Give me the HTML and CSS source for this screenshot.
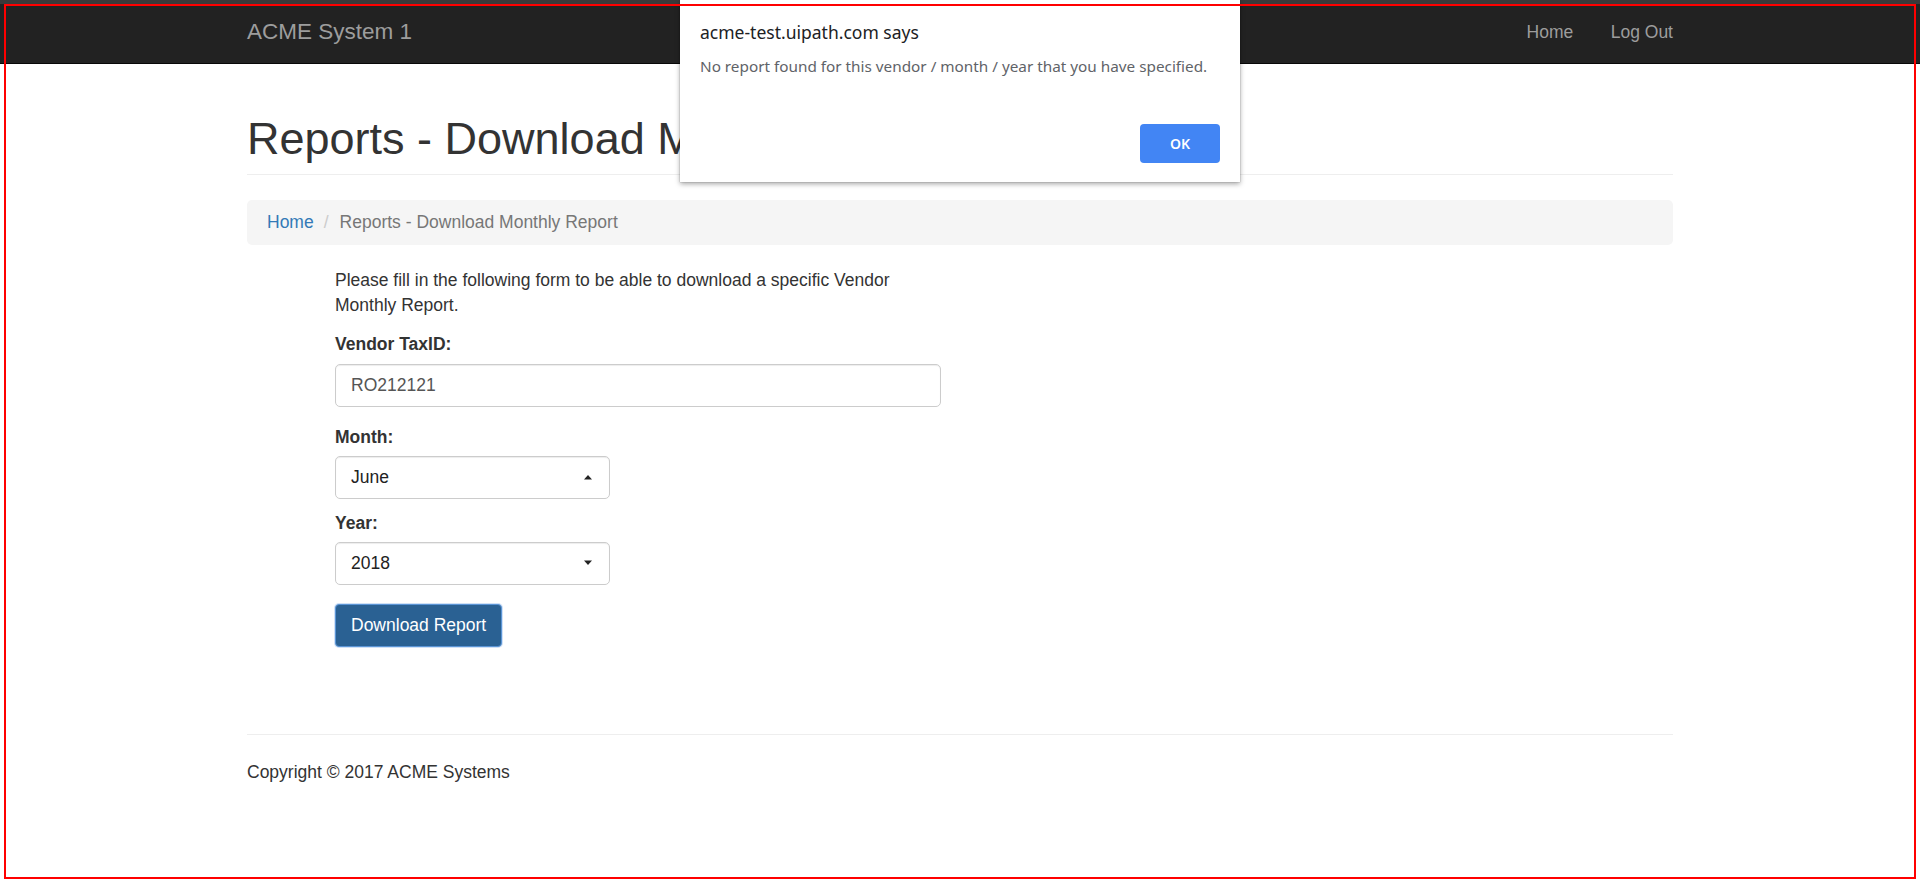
FILE: index.html
```html
<!DOCTYPE html>
<html lang="en">
<head>
<meta charset="utf-8">
<title>ACME System 1 - Reports</title>
<link rel="stylesheet" href="styles.css">
</head>
<body>
<header class="navbar">
  <div class="container nav-inner">
    <a class="brand" href="#">ACME System 1</a>
    <ul class="nav">
      <li><a href="#">Home</a></li>
      <li><a href="#">Log Out</a></li>
    </ul>
  </div>
</header>

<main class="container">
  <div class="page-header">
    <h1>Reports - Download Monthly Report</h1>
  </div>
  <ol class="breadcrumb">
    <li><a href="#">Home</a></li>
    <li class="sep">/</li>
    <li class="active">Reports - Download Monthly Report</li>
  </ol>

  <form class="report-form">
    <p class="intro">Please fill in the following form to be able to download a specific Vendor Monthly Report.</p>
    <div class="group g-vendor">
      <label class="lbl">Vendor TaxID:</label>
      <input class="field field-wide" type="text" value="RO212121">
    </div>
    <div class="group g-month">
      <label class="lbl">Month:</label>
      <div class="field field-select"><span>June</span><svg class="caret" width="10" height="6" viewBox="0 0 10 6"><path d="M1 5.5 L5 1 L9 5.5 Z" fill="#222"/></svg></div>
    </div>
    <div class="group g-year">
      <label class="lbl">Year:</label>
      <div class="field field-select"><span>2018</span><svg class="caret" width="10" height="6" viewBox="0 0 10 6"><path d="M1 0.5 L9 0.5 L5 5 Z" fill="#222"/></svg></div>
    </div>
    <button class="btn" type="button">Download Report</button>
  </form>

  <hr class="rule">
  <footer class="footer">Copyright © 2017 ACME Systems</footer>
</main>

<div class="alert-dialog">
  <div class="alert-title">acme-test.uipath.com says</div>
  <div class="alert-msg">No report found for this vendor / month / year that you have specified.</div>
  <div class="alert-actions"><button class="alert-ok" type="button">OK</button></div>
</div>

<div class="frame"></div>
</body>
</html>
```

FILE: styles.css
```css
* { box-sizing: border-box; }
html, body { margin: 0; padding: 0; }
body {
  font-family: "Liberation Sans", Arial, sans-serif;
  font-size: 17.5px;
  line-height: 25px;
  color: #333;
  background: #fff;
  overflow: hidden;
  height: 883px;
  position: relative;
}
a { text-decoration: none; }

.container { width: 1426px; margin: 0 auto; }

.navbar {
  height: 64px;
  background: #222;
  border-bottom: 1px solid #080808;
  box-shadow: inset 0 4px 0 #3a3a3a;
}
.nav-inner { display: flex; justify-content: space-between; align-items: flex-start; height: 63px; }
.brand {
  display: block;
  font-size: 22.5px;
  line-height: 25px;
  padding: 19px 0;
  color: #9d9d9d;
}
.nav { list-style: none; margin: 0 -18.75px 0 0; padding: 0; display: flex; }
.nav a {
  display: block;
  padding: 20px 18.75px 18px;
  line-height: 25px;
  color: #9d9d9d;
}

.page-header {
  margin-top: 50px;
  padding-bottom: 10.5px;
  border-bottom: 1px solid #eee;
}
.page-header h1 {
  margin: 0;
  font-size: 45px;
  line-height: 49.5px;
  font-weight: 500;
  color: #333;
}

.breadcrumb {
  list-style: none;
  margin: 25px 0 23px;
  padding: 10px 20px;
  background: #f5f5f5;
  border-radius: 5px;
  display: flex;
}
.breadcrumb a { color: #337ab7; }
.breadcrumb .sep { color: #ccc; padding: 0 11px 0 10px; }
.breadcrumb .active { color: #777; }

.report-form { margin-left: 88px; width: 606px; }
.intro { margin: 0 0 14px; }
.lbl { display: block; font-weight: bold; margin-bottom: 7px; }
.g-vendor { margin-bottom: 18px; }
.g-month { margin-bottom: 12px; }
.g-month .lbl, .g-year .lbl { margin-bottom: 6.5px; }
.g-year { margin-bottom: 19px; }

.field {
  display: block;
  height: 42.5px;
  padding: 0 15px;
  border: 1px solid #ccc;
  border-radius: 5px;
  background: #fff;
  font-family: "Liberation Sans", Arial, sans-serif;
  font-size: 17.5px;
  color: #555;
  box-shadow: inset 0 1px 1px rgba(0,0,0,.075);
}
.field-wide { width: 606px; outline: none; }
.field-select {
  width: 275px;
  display: flex;
  align-items: center;
  justify-content: space-between;
  color: #222;
  padding-right: 16px;
}
.caret { display: block; }

.btn {
  display: block;
  height: 43px;
  padding: 0 15px;
  font-family: "Liberation Sans", Arial, sans-serif;
  font-size: 17.5px;
  color: #fff;
  background: #2a6193;
  border: 1px solid #5b95d6;
  border-radius: 4px;
  box-shadow: 0 0 0 1px rgba(120,170,230,.35);
}

.rule { margin: 87px 0 0; border: 0; border-top: 1px solid #eee; height: 0; }
.footer { margin-top: 25px; }

.alert-dialog {
  position: absolute;
  left: 680px;
  top: 0;
  width: 560px;
  height: 182px;
  background: #fff;
  box-shadow: 0 2px 5px rgba(0,0,0,.35), 0 0 1px rgba(0,0,0,.4);
  padding: 20px 20px 19px 20px;
  display: flex;
  flex-direction: column;
  font-family: "Noto Sans", "Open Sans", sans-serif;
}
.alert-title { font-size: 17.5px; line-height: 24px; color: #202124; }
.alert-msg { margin-top: 11px; font-size: 15.3px; line-height: 22px; color: #5f6368; }
.alert-actions { margin-top: auto; display: flex; justify-content: flex-end; }
.alert-ok {
  width: 80px;
  height: 39px;
  border: 0;
  border-radius: 4px;
  background: #4285f4;
  color: #fff;
  font-family: "Noto Sans", "Open Sans", sans-serif;
  font-weight: 600;
  font-size: 14px;
}

.frame {
  position: absolute;
  left: 4px;
  top: 4px;
  width: 1912px;
  height: 875px;
  border: 2px solid #ff0000;
  pointer-events: none;
}
```
